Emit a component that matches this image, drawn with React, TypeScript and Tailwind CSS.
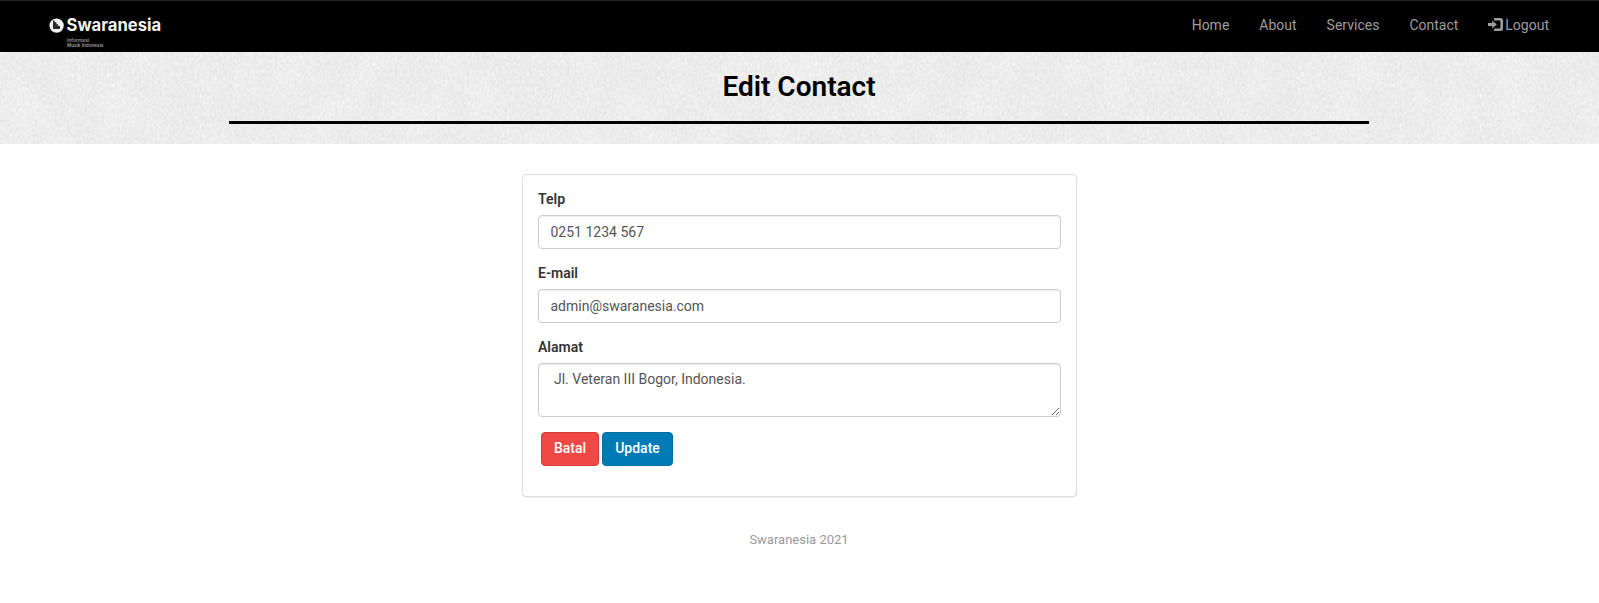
const navItems = ["Home", "About", "Services", "Contact"];

function Logo() {
  return (
    <a href="#" aria-label="Swaranesia" className="block">
      <svg width="120" height="34" viewBox="0 0 120 34" fill="#f2f2f2">
        <circle cx="7.6" cy="8.6" r="7.2" />
        <path
          d="M4 3.4h1.7v1.9h1.7v1.9h1.8v1.9h1.8v2.8H4z"
          fill="#2b2b2b"
        />
        <text x="17.6" y="14" fontSize="17" fontWeight="650" textLength="94.5" lengthAdjust="spacingAndGlyphs" fontFamily="Inter, sans-serif">
          Swaranesia
        </text>
        <g fontFamily="Inter, sans-serif" fontSize="4.6" fontWeight="600" fill="#999999">
          <text x="18" y="25" textLength="22">Informasi</text>
          <text x="18" y="29.6" textLength="36.5">Musik Indonesia</text>
        </g>
      </svg>
    </a>
  );
}

function LogoutIcon() {
  return (
    <svg width="15" height="14" viewBox="0 0 15 14" fill="#9d9d9d" className="mt-[3px] mr-[2px]">
      <path d="M6 0h6.5A2.5 2.5 0 0 1 15 2.5v8a2.5 2.5 0 0 1-2.5 2.5H6v-2.4h5.6a.8.8 0 0 0 .8-.8V3.2a.8.8 0 0 0-.8-.8H6z" />
      <path d="M4.2 2.6l4.6 3.9-4.6 3.9V8H0V5h4.2z" />
    </svg>
  );
}

function PaperTexture() {
  return (
    <svg className="absolute inset-0 h-full w-full" aria-hidden="true">
      <filter id="grain" x="0" y="0" width="100%" height="100%" colorInterpolationFilters="sRGB">
        <feTurbulence type="fractalNoise" baseFrequency="0.4 0.28" numOctaves="3" seed="8" result="fine" />
        <feColorMatrix
          in="fine"
          type="matrix"
          values="0.18 0 0 0 0.84 0.18 0 0 0 0.84 0.18 0 0 0 0.84 0 0 0 0 1"
          result="fineGray"
        />
        <feTurbulence type="fractalNoise" baseFrequency="0.03 0.025" numOctaves="3" seed="3" result="broad" />
        <feColorMatrix
          in="broad"
          type="matrix"
          values="0.06 0 0 0 0.895 0.06 0 0 0 0.895 0.06 0 0 0 0.895 0 0 0 0 1"
          result="broadGray"
        />
        <feComposite in="fineGray" in2="broadGray" operator="arithmetic" k2="0.5" k3="0.5" />
      </filter>
      <rect width="100%" height="100%" filter="url(#grain)" />
    </svg>
  );
}

const control =
  "block w-full rounded border border-[#cccccc] bg-white px-[11.5px] text-sm leading-5 text-[#555555] shadow-[inset_0_1px_1px_rgba(0,0,0,0.075)] outline-none";
const label = "mb-[6px] -mt-px block text-sm leading-5 font-semibold text-[#333333]";

export default function App() {
  return (
    <div className="min-h-[603px] bg-white font-[Roboto,sans-serif] text-sm leading-5">
      <nav className="flex h-[52px] items-start justify-between border-t border-[#222222] bg-black pr-[35px] pl-[49px]">
        <div className="pt-4">
          <Logo />
        </div>
        <ul className="flex pt-[14px] text-[#9d9d9d]">
          {navItems.map((item) => (
            <li key={item} className="px-[15px]">
              <a href="#">{item}</a>
            </li>
          ))}
          <li className="px-[15px]">
            <a href="#" className="flex">
              <LogoutIcon />
              Logout
            </a>
          </li>
        </ul>
      </nav>

      <header className="relative h-[92px] bg-[#ebebeb]">
        <PaperTexture />
        <div className="relative ml-[229px] w-[1140px] pt-[19px]">
          <h1 className="text-center text-[28px] leading-[31px] font-semibold text-black">Edit Contact</h1>
          <div className="mt-[19px] h-[3px] bg-black" />
        </div>
      </header>

      <main className="mx-auto mt-[30px] w-[555px] rounded border border-[#dddddd] bg-white p-[15px] shadow-[0_1px_1px_rgba(0,0,0,0.05)]">
        <form>
          <div className="mb-[15px]">
            <label className={label} htmlFor="telp">Telp</label>
            <input id="telp" className={`${control} h-[34px] py-1.5`} defaultValue="0251 1234 567" />
          </div>
          <div className="mb-[15px]">
            <label className={label} htmlFor="email">E-mail</label>
            <input id="email" className={`${control} h-[34px] py-1.5`} defaultValue="admin@swaranesia.com" />
          </div>
          <div className="mb-[15px]">
            <label className={label} htmlFor="alamat">Alamat</label>
            <textarea id="alamat" className={`${control} h-[54px] resize pt-[5px] pb-[7px]`} defaultValue=" Jl. Veteran III Bogor, Indonesia." />
          </div>
          <div className="mb-[15px] flex gap-[3px] pl-[3px] font-medium text-white">
            <button type="button" className="h-[34px] w-[58px] rounded border border-[#d73a37] bg-[#ef4845] pb-[2px]">
              Batal
            </button>
            <button type="button" className="h-[34px] w-[71px] rounded border border-[#006da3] bg-[#007bb6] pb-[2px]">
              Update
            </button>
          </div>
        </form>
      </main>

      <footer className="mt-[33px] mr-px text-center text-[13px] leading-5 text-[#999999]">Swaranesia 2021</footer>
    </div>
  );
}
